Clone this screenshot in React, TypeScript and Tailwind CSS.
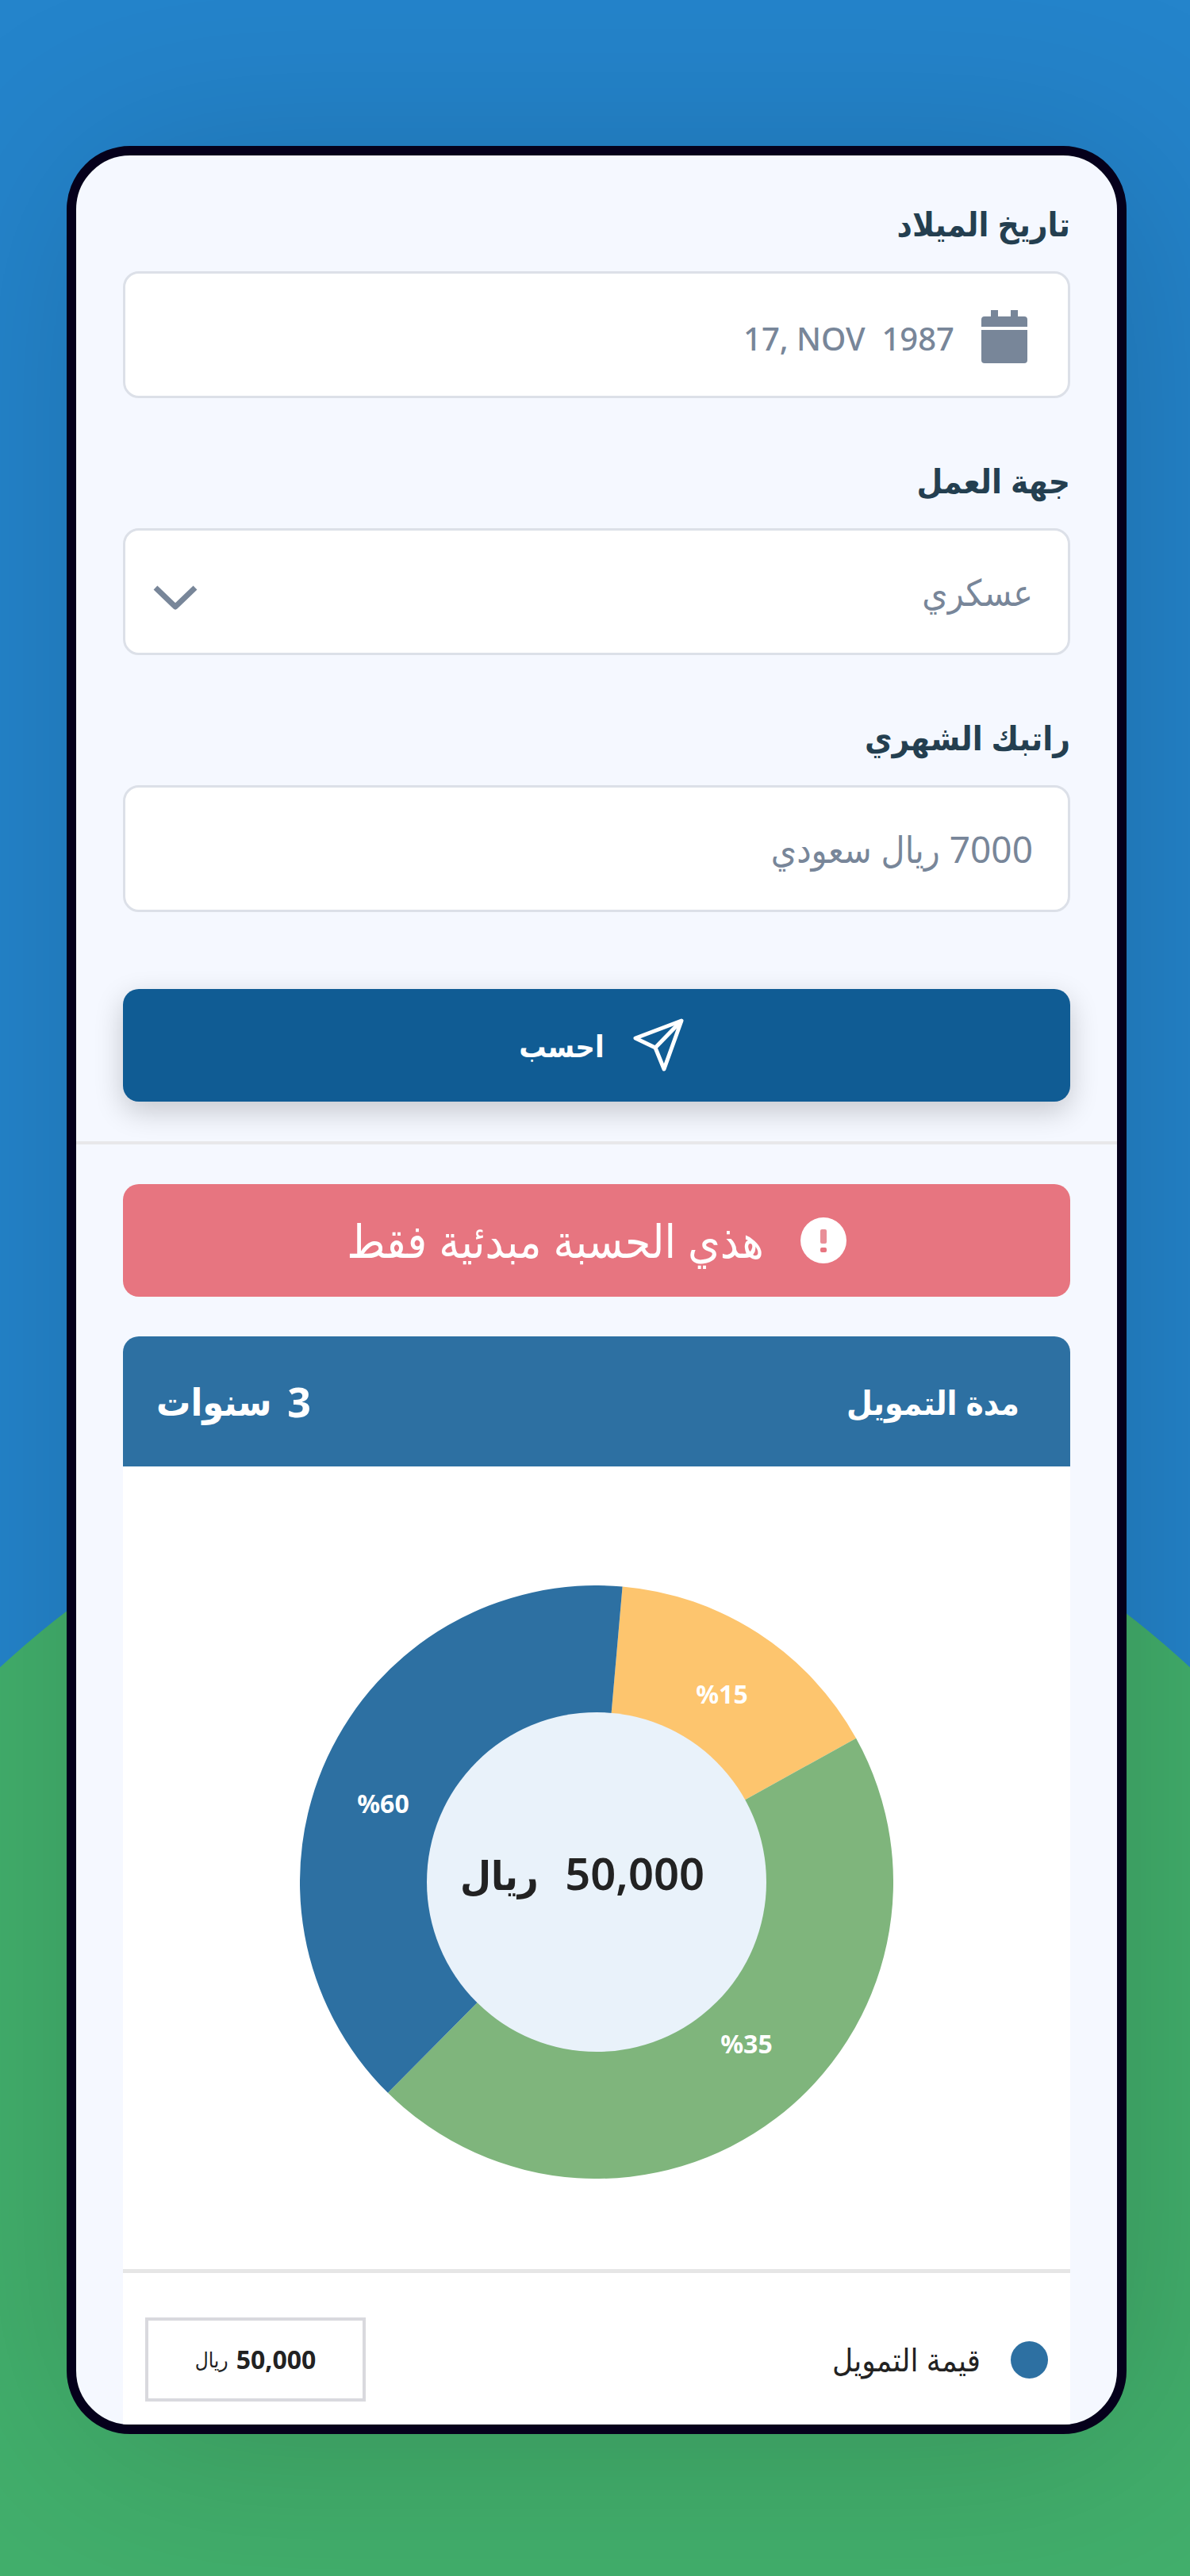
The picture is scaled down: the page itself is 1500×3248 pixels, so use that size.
import React from "react";

const FONT = "font-['Noto_Sans','DejaVu_Sans_Condensed','DejaVu_Sans',sans-serif]";
const FIELD =
  "block h-40 w-full appearance-none rounded-[20px] border-[3px] border-[#dce0e8] bg-white text-right text-[#788699] outline-none";

function CalendarIcon() {
  return (
    <svg viewBox="0 0 58 67" className="h-[67px] w-[58px]" fill="currentColor" aria-hidden="true">
      <path d="M12 0h9v8h16V0h9v8h8a4 4 0 0 1 4 4v9H0v-9a4 4 0 0 1 4-4h8z" />
      <path d="M0 25h58v38a4 4 0 0 1-4 4H4a4 4 0 0 1-4-4z" />
    </svg>
  );
}

function ChevronIcon() {
  return (
    <svg viewBox="0 0 56 32" className="h-8 w-14" fill="none" stroke="currentColor" strokeWidth="7" strokeLinejoin="round" aria-hidden="true">
      <path d="M3 3l25 24L53 3" />
    </svg>
  );
}

function SendIcon() {
  return (
    <svg viewBox="0 0 64 68" className="h-[68px] w-16" fill="none" stroke="currentColor" strokeWidth="5" strokeLinejoin="round" aria-hidden="true">
      <path d="M61 3L3 25l25 12 11 27z" />
      <path d="M28 37L61 3" />
    </svg>
  );
}

function AlertIcon() {
  return (
    <svg viewBox="0 0 58 58" className="size-[58px]" aria-hidden="true">
      <circle cx="29" cy="29" r="29" fill="#fff" />
      <rect x="25" y="15" width="8" height="18" rx="2" fill="#e98f98" />
      <rect x="25" y="38" width="8" height="6" rx="2" fill="#e77580" />
    </svg>
  );
}

const SLICES = [
  { from: 5, to: 61, color: "#fdc56e", label: "%15", x: 532, y: 149 },
  { from: 61, to: 224.7, color: "#7fb57c", label: "%35", x: 563, y: 590 },
  { from: 224.7, to: 365, color: "#2d70a2", label: "%60", x: 105, y: 287 },
];

function point(angle: number, radius: number) {
  const a = (angle * Math.PI) / 180;
  return `${(374 + radius * Math.sin(a)).toFixed(2)} ${(374 - radius * Math.cos(a)).toFixed(2)}`;
}

function slicePath(from: number, to: number) {
  const large = to - from > 180 ? 1 : 0;
  return `M${point(from, 374)}A374 374 0 ${large} 1 ${point(to, 374)}L${point(to, 210)}A210 210 0 ${large} 0 ${point(from, 210)}Z`;
}

function DonutChart() {
  return (
    <svg viewBox="0 0 748 748" className="w-full max-w-[748px] [direction:ltr]" role="img" aria-label="50,000 ريال">
      {SLICES.map((s) => (
        <path key={s.label} d={slicePath(s.from, s.to)} fill={s.color} />
      ))}
      <circle cx="374" cy="374" r="214" fill="#e9f2fa" />
      {SLICES.map((s) => (
        <text key={s.label} x={s.x} y={s.y} textAnchor="middle" className="fill-white text-[32px] font-bold">
          {s.label}
        </text>
      ))}
      <text x="510" y="384" textAnchor="end" className="fill-[#222] text-[56px] font-semibold">
        50,000
      </text>
      <text x="202" y="384" textAnchor="start" className="fill-[#222] text-[50px] font-semibold">
        ريال
      </text>
    </svg>
  );
}

function Field({ id, label, children }: { id: string; label: string; children: React.ReactNode }) {
  return (
    <div>
      <label htmlFor={id} className="mb-[34px] block text-[42px] leading-[52px] font-bold text-[#243f50]">
        {label}
      </label>
      <div className="relative">{children}</div>
    </div>
  );
}

export default function App() {
  return (
    <main dir="rtl" lang="ar" className={`relative min-h-screen overflow-hidden bg-[#2484cb] pt-[184px] pr-20 pb-[180px] pl-[84px] ${FONT}`}>
      <div className="absolute top-[1807px] left-1/2 size-[2200px] -translate-x-1/2 rounded-full bg-[#42af6c]" />
      <div className="relative overflow-hidden rounded-[80px] border-12 border-[#05001b] bg-[#f5f8ff] shadow-[20px_20px_280px_rgba(0,0,0,0.17)]">
        <form className="px-[59px] pt-[60px] pb-[50px]" onSubmit={(e) => e.preventDefault()}>
          <div className="space-y-[78px]">
            <Field id="birth" label="تاريخ الميلاد">
              <input id="birth" type="text" dir="ltr" defaultValue="17, NOV  1987" className={`${FIELD} pt-2 pr-[143px] pl-11 text-[40px] font-medium`} />
              <span className="pointer-events-none absolute inset-y-0 right-[54px] flex items-center pt-1 text-[#788699]">
                <CalendarIcon />
              </span>
            </Field>
            <Field id="employer" label="جهة العمل">
              <select id="employer" className={`${FIELD} px-11 text-[46px]`}>
                <option>عسكري</option>
              </select>
              <span className="pointer-events-none absolute inset-y-0 left-[38px] flex items-center pt-4 text-[#788699]">
                <ChevronIcon />
              </span>
            </Field>
            <Field id="salary" label="راتبك الشهري">
              <input id="salary" type="text" defaultValue="7000 ريال سعودي" className={`${FIELD} px-11 text-[46px]`} />
            </Field>
          </div>
          <button
            type="submit"
            className="mt-[97px] flex h-[142px] w-full items-center justify-center gap-9 rounded-[20px] bg-[#105c94] pl-3 text-[38px] font-bold text-white shadow-[0_12px_36px_rgba(0,0,0,0.2)]"
          >
            <SendIcon />
            <span>احسب</span>
          </button>
        </form>
        <section className="border-t-4 border-[#e8e8ea] px-[59px] pt-[50px]">
          <p role="alert" className="flex h-[142px] items-center justify-center gap-[46px] rounded-[20px] bg-[#e77580] text-[58px] leading-[70px] text-white">
            <AlertIcon />
            <span>هذي الحسبة مبدئية فقط</span>
          </p>
          <div className="mt-[50px] overflow-hidden rounded-t-[20px] bg-white">
            <header className="flex h-[164px] items-center justify-between bg-[#2d70a2] pr-16 pl-[42px] font-bold text-white">
              <h2 className="text-[42px]">مدة التمويل</h2>
              <p className="flex items-center gap-5 text-[48px]">
                <span className="text-[52px]">3</span>
                <span>سنوات</span>
              </p>
            </header>
            <div className="flex justify-center pt-[150px] pb-[114px]">
              <DonutChart />
            </div>
            <div className="flex items-center justify-between border-t-[5px] border-[#e6e6e6] pt-[56px] pr-7 pb-[29px] pl-7">
              <div className="flex items-center gap-[38px] text-[40px] leading-[60px] text-[#222]">
                <span className="size-[47px] rounded-full bg-[#2d70a2]" />
                <span>قيمة التمويل</span>
              </div>
              <p className="flex h-[106px] w-[278px] items-center justify-center gap-[10px] border-4 border-[#d9d9de] text-[#222]">
                <span className="text-[32px] font-bold">50,000</span>
                <span className="text-[26px]">ريال</span>
              </p>
            </div>
          </div>
        </section>
      </div>
    </main>
  );
}
